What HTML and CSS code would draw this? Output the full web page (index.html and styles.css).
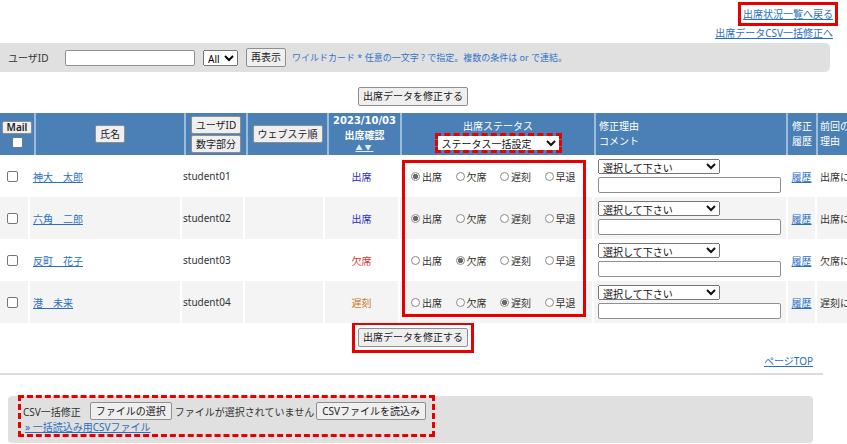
FILE: index.html
```html
<!DOCTYPE html>
<html lang="ja">
<head>
<meta charset="utf-8">
<title>出席データ修正</title>
<link rel="stylesheet" href="styles.css">
</head>
<body>
<div class="toplinks">
  <div class="tl-row"><a href="#" class="back-link">出席状況一覧へ戻る</a></div>
  <div class="tl-row"><a href="#">出席データCSV一括修正へ</a></div>
</div>

<div class="search">
  <span class="lbl">ユーザID</span>
  <input type="text" class="uid">
  <select class="sel-all"><option>All</option></select>
  <button class="btn">再表示</button>
  <span class="hint">ワイルドカード * 任意の一文字 ? で指定。複数の条件は or で連結。</span>
</div>

<div class="actions"><button class="btn">出席データを修正する</button></div>

<div class="tbl">
  <div class="thead">
    <div class="th"><button class="hbtn mail">Mail</button><input type="checkbox" class="cb hcb"></div>
    <div class="th"><button class="hbtn">氏名</button></div>
    <div class="th stack"><button class="hbtn">ユーザID</button><button class="hbtn">数字部分</button></div>
    <div class="th"><button class="hbtn">ウェブステ順</button></div>
    <div class="th date"><span class="d1">2023/10/03</span><span>出席確認</span><span class="sort">▲▼</span></div>
    <div class="th"><span class="stat-title">出席ステータス</span><select class="bulk"><option>ステータス一括設定</option></select></div>
    <div class="th left two"><span>修正理由</span><span>コメント</span></div>
    <div class="th two"><span>修正</span><span>履歴</span></div>
    <div class="th left two tight"><span>前回の</span><span>理由</span></div>
  </div>

  <div class="row">
    <div class="td"><input type="checkbox" class="cb"></div>
    <div class="td name"><a href="#">神大　太郎</a></div>
    <div class="td uidc">student01</div>
    <div class="td"></div>
    <div class="td st att">出席</div>
    <div class="td radios">
      <label><input type="radio" name="s1" checked>出席</label>
      <label><input type="radio" name="s1">欠席</label>
      <label><input type="radio" name="s1">遅刻</label>
      <label><input type="radio" name="s1">早退</label>
    </div>
    <div class="td reason"><select class="rsel"><option>選択して下さい</option></select><input type="text" class="rtxt"></div>
    <div class="td hist"><a href="#">履歴</a></div>
    <div class="td prev">出席に</div>
  </div>

  <div class="row alt">
    <div class="td"><input type="checkbox" class="cb"></div>
    <div class="td name"><a href="#">六角　二郎</a></div>
    <div class="td uidc">student02</div>
    <div class="td"></div>
    <div class="td st att">出席</div>
    <div class="td radios">
      <label><input type="radio" name="s2" checked>出席</label>
      <label><input type="radio" name="s2">欠席</label>
      <label><input type="radio" name="s2">遅刻</label>
      <label><input type="radio" name="s2">早退</label>
    </div>
    <div class="td reason"><select class="rsel"><option>選択して下さい</option></select><input type="text" class="rtxt"></div>
    <div class="td hist"><a href="#">履歴</a></div>
    <div class="td prev">出席に</div>
  </div>

  <div class="row">
    <div class="td"><input type="checkbox" class="cb"></div>
    <div class="td name"><a href="#">反町　花子</a></div>
    <div class="td uidc">student03</div>
    <div class="td"></div>
    <div class="td st abs">欠席</div>
    <div class="td radios">
      <label><input type="radio" name="s3">出席</label>
      <label><input type="radio" name="s3" checked>欠席</label>
      <label><input type="radio" name="s3">遅刻</label>
      <label><input type="radio" name="s3">早退</label>
    </div>
    <div class="td reason"><select class="rsel"><option>選択して下さい</option></select><input type="text" class="rtxt"></div>
    <div class="td hist"><a href="#">履歴</a></div>
    <div class="td prev">欠席に</div>
  </div>

  <div class="row alt">
    <div class="td"><input type="checkbox" class="cb"></div>
    <div class="td name"><a href="#">港　未来</a></div>
    <div class="td uidc">student04</div>
    <div class="td"></div>
    <div class="td st late">遅刻</div>
    <div class="td radios">
      <label><input type="radio" name="s4">出席</label>
      <label><input type="radio" name="s4">欠席</label>
      <label><input type="radio" name="s4" checked>遅刻</label>
      <label><input type="radio" name="s4">早退</label>
    </div>
    <div class="td reason"><select class="rsel"><option>選択して下さい</option></select><input type="text" class="rtxt"></div>
    <div class="td hist"><a href="#">履歴</a></div>
    <div class="td prev">遅刻に</div>
  </div>

  <div class="mark-radios"></div>
</div>

<div class="actions2"><span class="mark-wrap"><button class="btn">出席データを修正する</button></span></div>

<div class="pagetop"><a href="#">ページTOP</a></div>
<div class="divider"></div>

<div class="csv">
  <div class="csv-inner">
    <div class="csv-row">
      <span>CSV一括修正</span>
      <button class="btn2 file-btn">ファイルの選択</button>
      <span class="nofile">ファイルが選択されていません</span>
      <button class="btn2">CSVファイルを読込み</button>
    </div>
    <div class="csv-link"><a href="#">» 一括読込み用CSVファイル</a></div>
  </div>
</div>
</body>
</html>
```

FILE: styles.css
```css
* { box-sizing: border-box; }
html, body { margin: 0; padding: 0; }
body {
  width: 847px;
  height: 444px;
  overflow: hidden;
  background: #fff;
  font-family: "Noto Sans", "Noto Sans CJK JP", sans-serif;
  font-size: 10px;
  color: #333;
}
a { color: #2a6fc2; text-decoration: underline; }

/* top links */
.toplinks { padding-top: 5px; padding-right: 14px; text-align: right; }
.tl-row { height: 19px; line-height: 19px; }
.back-link { outline: 3px solid #e60000; outline-offset: 2px; }

/* search bar */
.search {
  width: 830px;
  height: 29px;
  background: #e0e0e0;
  border-radius: 0 5px 5px 0;
  display: flex;
  align-items: center;
  padding-left: 8px;
}
.lbl { width: 57px; color: #333; }
.uid {
  width: 130px; height: 16px; margin: 0 8px 0 0; padding: 0 2px;
  border: 1px solid #8f8f8f; border-radius: 2px; background: #fff;
}
.sel-all {
  width: 35px; height: 16px; margin: 0 8px 0 0; padding: 0;
  font: inherit; font-size: 10px;
}
.hint { color: #2f74c8; font-size: 9px; margin-left: 6px; }

/* buttons */
.btn, .hbtn, .btn2 {
  font-family: "Noto Sans", "Noto Sans CJK JP", sans-serif;
  font-size: 10px;
  color: #222;
  background: #efefef;
  border: 1px solid #8f8f8f;
  border-radius: 2px;
  margin: 0;
}
.btn { line-height: 13px; padding: 2px 4px; }
.hbtn { line-height: 14px; padding: 1px 4px; }
.btn2 { line-height: 14px; padding: 1px 5px; }

.actions { width: 826px; margin-top: 15px; height: 19px; text-align: center; }
.actions2 { width: 826px; margin-top: 5px; height: 19px; text-align: center; }
.mark-wrap {
  display: inline-block;
  vertical-align: top;
  outline: 3px solid #e60000;
  outline-offset: 3px;
}
.mark-wrap .btn { display: block; }

/* table */
.tbl { position: relative; width: 880px; margin-top: 7px; }
.thead {
  display: grid;
  grid-template-columns: 34px 150px 62px 81px 73px 194px 192px 30px 1fr;
  height: 42px;
  background: #4a80b5;
  color: #fff;
}
.th {
  border-left: 2px solid #9dbcd9;
  display: flex;
  flex-direction: column;
  align-items: center;
  justify-content: center;
}
.th:first-child { border-left: 0; }
.th.left { align-items: flex-start; padding-left: 3px; }
.th.tight { padding-left: 2px; }
.th.two { line-height: 15px; }
.th.stack { gap: 1px; }
.hbtn.mail { padding: 0 4px; line-height: 11px; font-weight: 600; }
.date { font-weight: bold; line-height: 14px; }
.date .d1 { font-family: "DejaVu Sans", sans-serif; font-size: 10px; }
.sort { font-size: 7px; letter-spacing: 2px; color: #e4edf7; text-decoration: underline; line-height: 12px; font-weight: normal; }
.stat-title { line-height: 15px; }
.bulk {
  width: 121px; height: 14px; margin-top: 2px; padding: 0;
  font: inherit; font-size: 10px; color: #111; background: #fff;
  border: 0;
  outline: 3px dashed #e60000; outline-offset: 0;
}

.row {
  display: grid;
  grid-template-columns: 28px 152px 63px 80px 75px 194px 194px 29px 1fr;
  height: 42px;
  background: #fff;
}
.row.alt { background: #f4f4f4; }
.td { border-left: 2px solid #fff; display: flex; align-items: center; }
.td:first-child { border-left: 0; }
.name { padding-left: 3px; }
.uidc { padding-left: 1px; color: #333; }
.st { justify-content: center; }
.att { color: #2b2bcc; }
.abs { color: #e03535; }
.late { color: #d0741e; }
.radios { padding-left: 11px; gap: 13.5px; }
.radios label { display: flex; align-items: center; color: #333; }
.reason { flex-direction: column; align-items: flex-start; justify-content: center; padding-left: 4px; gap: 3px; }
.rsel {
  width: 122px; height: 15px; margin: 0; padding: 0;
  font: inherit; font-size: 10px; color: #111;
}
.rtxt {
  width: 183px; height: 16px; margin: 0; padding: 0 2px;
  border: 1px solid #8f8f8f; border-radius: 2px; background: #fff;
}
.hist { justify-content: center; }
.prev { padding-left: 3px; color: #333; white-space: nowrap; }

.cb {
  -webkit-appearance: none; appearance: none;
  width: 11px; height: 11px; margin: 0 0 0 7px;
  border: 1px solid #767676; border-radius: 2px; background: #fff;
}
.cb.hcb { margin: 3px 0 0 0; }
input[type="radio"] {
  -webkit-appearance: none; appearance: none;
  width: 9px; height: 9px; margin: 0 2px 0 0;
  border: 1px solid #8a8a8a; border-radius: 50%; background: #fff;
}
input[type="radio"]:checked {
  background: radial-gradient(circle, #6a6a6a 0 2.4px, #fff 2.9px);
}

.mark-radios {
  position: absolute;
  left: 402px; top: 47px;
  width: 184px; height: 157px;
  border: 3px solid #e60000;
  pointer-events: none;
}

/* footer area */
.pagetop { width: 813px; margin-top: 7px; line-height: 14px; text-align: right; }
.divider { width: 823px; height: 2px; background: #dcdcdc; margin-top: 5px; }
.csv {
  margin: 21px 0 0 8px;
  width: 805px; height: 47px;
  background: #e0e0e0;
  border-radius: 4px;
  padding-left: 10px;
}
.csv-inner {
  display: inline-block;
  margin-top: -1px;
  border: 3px dashed #e60000;
  padding: 4px 6px 0 2px;
}
.csv-row { display: flex; align-items: center; color: #333; }
.file-btn { margin-left: 9px; margin-right: 3px; }
.nofile { margin-right: 2px; }
.csv-link { line-height: 14px; padding-left: 2px; }
```
